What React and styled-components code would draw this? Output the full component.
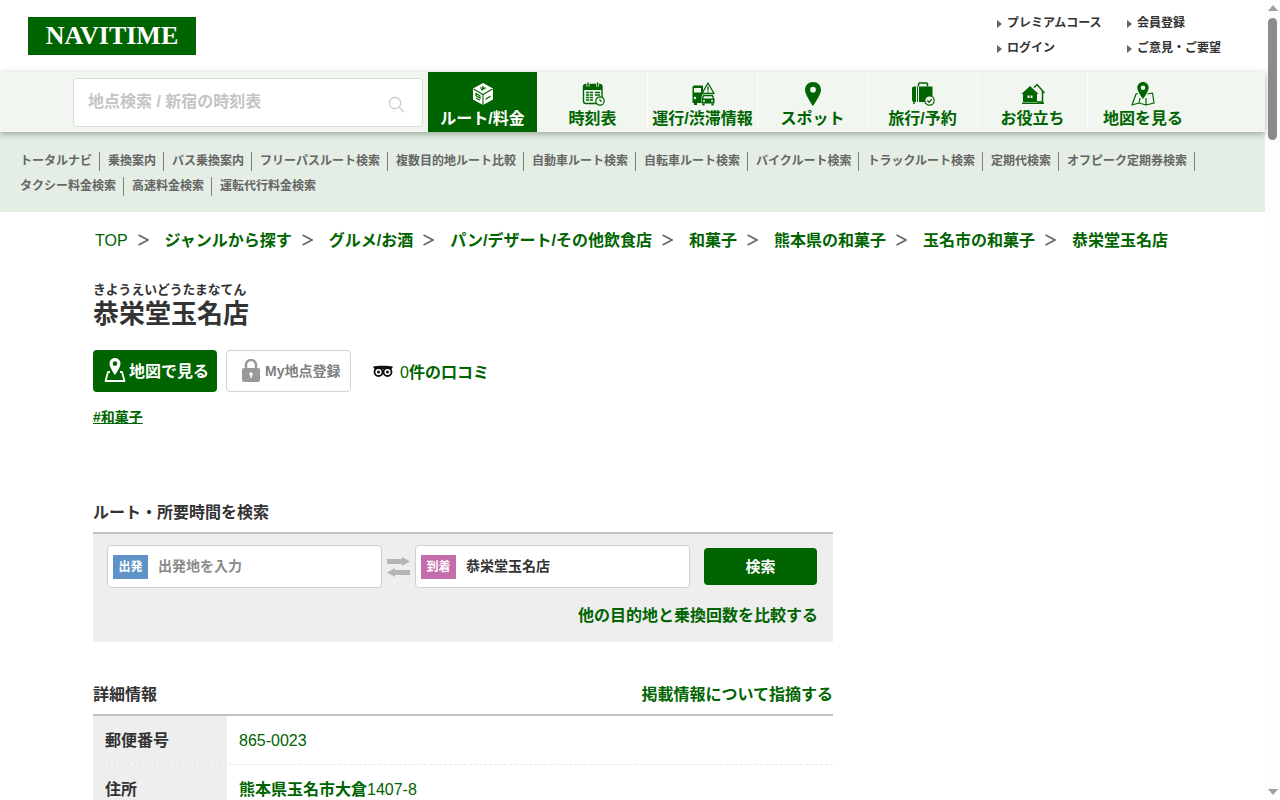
import React from "react";
import styled, { createGlobalStyle } from "styled-components";

const GREEN = "#006400";
const NAV_BG = "#f1f6f1";

const GlobalStyle = createGlobalStyle`
  html, body {
    margin: 0;
    padding: 0;
    background: #fff;
  }
  body {
    font-family: "Liberation Sans", "Noto Sans CJK JP", sans-serif;
    color: #333;
  }
  a {
    color: inherit;
    text-decoration: none;
  }
`;

const Page = styled.div`
  height: 100vh;
  overflow: hidden;
  display: flex;
`;

const Content = styled.div`
  flex: 1;
  min-width: 0;
`;

const Rail = styled.div`
  width: 15px;
  flex: none;
  background: #fdfdfd;
  display: flex;
  flex-direction: column;
  align-items: center;
`;

const RailArrow = styled.div`
  width: 0;
  height: 0;
  margin: ${(p) => (p.$down ? "auto 0 5px" : "5px 0 7px")};
  border-left: 5px solid transparent;
  border-right: 5px solid transparent;
  border-bottom: ${(p) => (p.$down ? "0" : "6px solid #a0a0a0")};
  border-top: ${(p) => (p.$down ? "6px solid #a0a0a0" : "0")};
`;

const RailThumb = styled.div`
  width: 9px;
  height: 122px;
  border-radius: 5px;
  background: #8c8c8c;
`;

const Top = styled.header`
  height: 72px;
  display: flex;
  justify-content: space-between;
  padding: 17px 43px 0 28px;
  box-sizing: border-box;
`;

const Logo = styled.a`
  width: 168px;
  height: 38px;
  background: ${GREEN};
  color: #fff;
  font-family: "Liberation Serif", serif;
  font-size: 26px;
  font-weight: 700;
  display: flex;
  align-items: center;
  justify-content: center;
`;

const TopLinks = styled.ul`
  list-style: none;
  margin: -6px 0 0;
  padding: 0;
  display: grid;
  grid-template-columns: 130px 95px;
  grid-auto-rows: 25px;
`;

const TopLink = styled.li`
  font-size: 12px;
  font-weight: 700;
  line-height: 25px;
  color: #333;
  padding-left: 10px;
  position: relative;
  &::before {
    content: "";
    position: absolute;
    left: 0;
    top: 9px;
    border-left: 5px solid #666;
    border-top: 4px solid transparent;
    border-bottom: 4px solid transparent;
  }
`;

const NavBar = styled.nav`
  height: 60px;
  background: ${NAV_BG};
  display: flex;
  padding-left: 73px;
  box-shadow: 0 2px 6px rgba(60, 80, 60, 0.45);
  position: relative;
  z-index: 1;
`;

const SearchBox = styled.div`
  width: 350px;
  height: 49px;
  box-sizing: border-box;
  margin: 6px 5px 0 0;
  background: #fff;
  border: 1px solid #d9d9d9;
  border-radius: 4px;
  display: flex;
  align-items: center;
  justify-content: space-between;
  padding: 0 17px 0 14px;
  font-size: 16px;
  font-weight: 700;
  color: #c4c4c4;
  svg {
    margin-top: 3px;
  }
`;

const SearchText = styled.span`
  margin-top: -5px;
`;

const NavItem = styled.a`
  width: 110px;
  flex: none;
  box-sizing: border-box;
  display: flex;
  flex-direction: column;
  align-items: center;
  padding-top: 10px;
  font-size: 16px;
  font-weight: 700;
  line-height: 20px;
  white-space: nowrap;
  color: ${(p) => (p.$active ? "#fff" : GREEN)};
  background: ${(p) => (p.$active ? GREEN : "transparent")};
  border-right: ${(p) => (p.$last ? "0" : "1px solid #fbfdfb")};
  svg {
    display: block;
    margin-bottom: 3px;
  }
`;

const SubNav = styled.div`
  height: 80px;
  background: #e4eee4;
  padding: 20px 20px 0;
  box-sizing: border-box;
  display: flex;
  flex-wrap: wrap;
  align-content: flex-start;
  row-gap: 6px;
`;

const SubLink = styled.a`
  font-size: 12px;
  font-weight: 700;
  line-height: 18px;
  height: 19px;
  color: #666;
  padding-right: 7px;
  margin-right: 8px;
  border-right: ${(p) => (p.$last ? "0" : "1px solid #808080")};
  white-space: nowrap;
`;

const Crumbs = styled.div`
  display: flex;
  align-items: baseline;
  height: 57px;
  box-sizing: border-box;
  padding: 17px 0 0 95px;
  font-size: 16px;
  line-height: 24px;
  font-weight: 700;
  color: ${GREEN};
  white-space: nowrap;
`;

const CrumbTop = styled.a`
  font-weight: 400;
`;

const Chevron = styled.svg`
  width: 11px;
  height: 12px;
  margin: 0 16px 0 10px;
  flex: none;
`;

const Main = styled.main`
  width: 740px;
  margin-left: 93px;
`;

const Ruby = styled.div`
  font-size: 12.8px;
  font-weight: 700;
  line-height: 14px;
  margin-top: 14px;
`;

const Title = styled.h1`
  font-size: 26px;
  font-weight: 700;
  line-height: 30px;
  margin: 2px 0 0;
  color: #333;
`;

const Actions = styled.div`
  display: flex;
  align-items: center;
  margin-top: 21px;
`;

const MapButton = styled.a`
  width: 124px;
  height: 42px;
  box-sizing: border-box;
  background: ${GREEN};
  border-radius: 4px;
  color: #fff;
  font-size: 16px;
  font-weight: 700;
  display: flex;
  align-items: center;
  padding: 0 0 2px 11px;
  gap: 3px;
  white-space: nowrap;
`;

const MyButton = styled.a`
  width: 125px;
  height: 42px;
  box-sizing: border-box;
  margin-left: 9px;
  background: #fff;
  border: 1px solid #d2d2d2;
  border-radius: 4px;
  color: #808080;
  font-size: 14px;
  font-weight: 700;
  display: flex;
  align-items: center;
  padding: 0 0 2px 15px;
  gap: 5px;
  white-space: nowrap;
`;

const Review = styled.a`
  margin-left: 22px;
  display: flex;
  align-items: center;
  gap: 7px;
  font-size: 16px;
  font-weight: 700;
  color: ${GREEN};
  span {
    font-weight: 400;
  }
`;

const Tag = styled.a`
  display: inline-block;
  margin-top: 16px;
  font-size: 14px;
  line-height: 18px;
  font-weight: 700;
  color: ${GREEN};
  text-decoration: underline;
`;

const SectionHead = styled.div`
  display: flex;
  justify-content: space-between;
  align-items: center;
  height: 43px;
  padding-bottom: 2px;
  margin-top: ${(p) => p.$top}px;
  font-size: 16px;
  font-weight: 700;
  color: #333;
  border-bottom: 2px solid #c3c3c3;
  box-sizing: border-box;
  a {
    color: ${GREEN};
  }
`;

const RoutePanel = styled.div`
  background: #eee;
  height: 108px;
  box-sizing: border-box;
  padding: 11px 15px 0 14px;
`;

const RouteRow = styled.div`
  display: flex;
  align-items: flex-start;
`;

const Field = styled.div`
  width: 275px;
  height: 43px;
  box-sizing: border-box;
  background: #fff;
  border: 1px solid #d0d0d0;
  border-radius: 4px;
  display: flex;
  align-items: center;
  padding-left: 5px;
  font-size: 14px;
  font-weight: 700;
  color: ${(p) => (p.$filled ? "#333" : "#8a8a8a")};
`;

const FieldText = styled.span`
  margin-top: -3px;
`;

const Badge = styled.span`
  width: 35px;
  height: 24px;
  padding-bottom: 2px;
  box-sizing: border-box;
  flex: none;
  margin-right: 10px;
  background: ${(p) => p.$bg};
  color: #fff;
  font-size: 12px;
  font-weight: 700;
  display: flex;
  align-items: center;
  justify-content: center;
`;

const Swap = styled.svg`
  width: 23px;
  height: 20px;
  margin: 12px 5px 0;
  flex: none;
`;

const SearchButton = styled.a`
  width: 113px;
  height: 37px;
  box-sizing: border-box;
  padding-bottom: 2px;
  margin: 3px 0 0 14px;
  background: ${GREEN};
  border-radius: 4px;
  color: #fff;
  font-size: 15px;
  font-weight: 700;
  display: flex;
  align-items: center;
  justify-content: center;
`;

const CompareLink = styled.a`
  display: block;
  text-align: right;
  margin: 16px 0 0;
  font-size: 16px;
  line-height: 24px;
  font-weight: 700;
  color: ${GREEN};
`;

const InfoRow = styled.div`
  display: flex;
  height: 49px;
  box-sizing: border-box;
  border-bottom: 1px dashed #e8e8e8;
`;

const InfoLabel = styled.div`
  width: 134px;
  flex: none;
  box-sizing: border-box;
  padding: 14px 0 0 12px;
  background: #eee;
  font-size: 16px;
  font-weight: 700;
  line-height: 22px;
  color: #333;
`;

const InfoValue = styled.div`
  padding: 14px 0 0 12px;
  font-size: 16px;
  line-height: 22px;
  color: ${GREEN};
`;

const NAV = [
  { label: "ルート/料金", active: true, icon: "route" },
  { label: "時刻表", icon: "timetable" },
  { label: "運行/渋滞情報", icon: "traffic" },
  { label: "スポット", icon: "spot" },
  { label: "旅行/予約", icon: "travel" },
  { label: "お役立ち", icon: "house" },
  { label: "地図を見る", icon: "map", last: true },
];

const SUB = [
  "トータルナビ", "乗換案内", "バス乗換案内", "フリーパスルート検索", "複数目的地ルート比較",
  "自動車ルート検索", "自転車ルート検索", "バイクルート検索", "トラックルート検索", "定期代検索",
  "オフピーク定期券検索", "タクシー料金検索", "高速料金検索", "運転代行料金検索",
];

const CRUMBS = [
  "ジャンルから探す", "グルメ/お酒", "パン/デザート/その他飲食店", "和菓子",
  "熊本県の和菓子", "玉名市の和菓子", "恭栄堂玉名店",
];

const NavIcon = ({ name }) => {
  switch (name) {
    case "route":
      return (
        <svg viewBox="0 0 24 24" width="24" height="24" fill="none">
          <path d="M12 1 22 6.500V17.500L12 23 2 17.500V6.500z" fill="#fff" />
          <path d="M2.500 7 12 12.500 21.500 7M12 12.500V23" stroke={GREEN} strokeWidth="1.100" />
          <path d="M9 6h6M12 3.800v4.400M10 8l4-2" stroke={GREEN} strokeWidth="1.200" />
          <path d="M5 11.500l4 2.300v2.200l-4-2.300zM5 16l4 2.300" stroke={GREEN} strokeWidth="1.200" />
          <path d="M14.500 18l5-3v-1.500l-5 3z" fill={GREEN} />
        </svg>
      );
    case "timetable":
      return (
        <svg viewBox="0 0 24 24" width="24" height="24" fill="none">
          <rect x="2.500" y="2.500" width="18.500" height="19" rx="2.500" fill={NAV_BG} stroke={GREEN} strokeWidth="1.400" />
          <path d="M2.500 5a2.500 2.500 0 0 1 2.500-2.500h13.500A2.500 2.500 0 0 1 21 5v3H2.500z" fill={GREEN} />
          <path d="M7 .5v4M16.500 .5v4" stroke={NAV_BG} strokeWidth="3" />
          <path d="M7 .5v4M16.500 .5v4" stroke={GREEN} strokeWidth="1.500" />
          <path d="M5 10.500h7M5 13h7M5 15.500h7M5 18h7M14 10.500h5M14 13h5" stroke={GREEN} strokeWidth="1.400" />
          <path d="M8.500 10v9" stroke={NAV_BG} strokeWidth=".7" />
          <circle cx="19" cy="19" r="4.200" fill={NAV_BG} stroke={GREEN} strokeWidth="1.200" />
          <path d="M19 16.700v2.500h2" stroke={GREEN} strokeWidth="1" />
        </svg>
      );
    case "traffic":
      return (
        <svg viewBox="0 0 24 24" width="24" height="24" fill="none">
          <path d="M1.500 5a1.500 1.500 0 0 1 1.500-1.500h9V9L10 18v3H1.500z" fill={GREEN} />
          <rect x="3" y="6" width="7" height="4.500" fill={NAV_BG} />
          <path d="M3 21h3v2H3z" fill={GREEN} />
          <circle cx="4" cy="16" r="1.200" fill={NAV_BG} />
          <path d="M17 1 23 11.500H11z" fill={NAV_BG} stroke={GREEN} strokeWidth="1.300" strokeLinejoin="round" />
          <path d="M17 4.500v4M17 9.200v1.300" stroke={GREEN} strokeWidth="1.300" />
          <path d="M10.500 17l1.500-4h10l1.500 4v4.500h-13z" fill={GREEN} />
          <path d="M13 14.200h8l.8 2.300H12.200z" fill={NAV_BG} />
          <path d="M12.500 21.500V23.500M21.500 21.500V23.500" stroke={GREEN} strokeWidth="2.200" />
          <circle cx="13" cy="19" r="1" fill={NAV_BG} />
          <circle cx="21" cy="19" r="1" fill={NAV_BG} />
        </svg>
      );
    case "spot":
      return (
        <svg viewBox="0 0 24 24" width="24" height="24">
          <path
            fill={GREEN}
            fillRule="evenodd"
            d="M12 0c-4.500 0-8 3.400-8 7.700C4 12.800 12 24 12 24s8-11.200 8-16.300C20 3.400 16.500 0 12 0zm0 4.800a2.900 2.900 0 1 1 0 5.800 2.900 2.900 0 0 1 0-5.800z"
          />
        </svg>
      );
    case "travel":
      return (
        <svg viewBox="0 0 24 24" width="24" height="24" fill="none">
          <path d="M7.500 4.500V2.200A1.200 1.200 0 0 1 8.700 1h6.600a1.200 1.200 0 0 1 1.200 1.200v2.300" stroke={GREEN} strokeWidth="1.500" />
          <path d="M3 4.500h18.500V20H3a2 2 0 0 1-2-2V6.500a2 2 0 0 1 2-2z" fill={GREEN} />
          <path d="M5.500 4.500V20M7.500 4.500V20" stroke={NAV_BG} strokeWidth="1" />
          <path d="M3 20v2" stroke={GREEN} strokeWidth="1.500" />
          <circle cx="18.500" cy="18.500" r="4.700" fill={NAV_BG} stroke={GREEN} strokeWidth="1.200" />
          <path d="M16.300 18.500l1.700 1.700 2.800-3" stroke={GREEN} strokeWidth="1.300" />
        </svg>
      );
    case "house":
      return (
        <svg viewBox="0 0 24 24" width="24" height="24" fill="none">
          <path d="M.5 12 9 4l8.500 8H16v8H2v-8z" fill={GREEN} />
          <path d="M13 5.500 16 2.500 23.500 11M21.500 9v11H16" stroke={GREEN} strokeWidth="1.500" />
          <path d="M1 20.500h22v1.500H1z" fill={GREEN} />
          <path d="M6.500 13.500h2v2.500h-2zM9.500 13.500h2v2.500h-2z" fill={NAV_BG} />
        </svg>
      );
    default:
      return (
        <svg viewBox="0 0 24 24" width="24" height="24" fill="none">
          <path d="M7 11.500 5 12 1 23l7-2 7 2 8-2-1.500-10-5 1M8 21l1-5M15 23v-7" stroke={GREEN} strokeWidth="1.200" strokeLinejoin="round" />
          <path
            fill={GREEN}
            fillRule="evenodd"
            d="M12 0C8.700 0 6.300 2.500 6.300 5.700 6.300 9.500 12 17 12 17s5.700-7.500 5.700-11.300C17.700 2.500 15.300 0 12 0zm0 3.400a2.300 2.300 0 1 1 0 4.600 2.300 2.300 0 0 1 0-4.600z"
          />
        </svg>
      );
  }
};

const App = () => (
  <Page>
    <GlobalStyle />
    <Content>
      <Top>
        <Logo href="#">NAVITIME</Logo>
        <TopLinks>
          <TopLink>プレミアムコース</TopLink>
          <TopLink>会員登録</TopLink>
          <TopLink>ログイン</TopLink>
          <TopLink>ご意見・ご要望</TopLink>
        </TopLinks>
      </Top>

      <NavBar>
        <SearchBox>
          <SearchText>地点検索 / 新宿の時刻表</SearchText>
          <svg viewBox="0 0 18 18" width="17" height="17" fill="none" stroke="#c4c4c4" strokeWidth="1.200">
            <circle cx="7.500" cy="7.500" r="6" />
            <path d="M12 12l5 5" />
          </svg>
        </SearchBox>
        {NAV.map((item) => (
          <NavItem key={item.label} href="#" $active={item.active} $last={item.last}>
            <NavIcon name={item.icon} />
            {item.label}
          </NavItem>
        ))}
      </NavBar>

      <SubNav>
        {SUB.map((s, i) => (
          <SubLink key={s} href="#" $last={i === SUB.length - 1}>
            {s}
          </SubLink>
        ))}
      </SubNav>

      <Crumbs>
        <CrumbTop href="#">TOP</CrumbTop>
        {CRUMBS.map((c) => (
          <React.Fragment key={c}>
            <Chevron viewBox="0 0 11 12" fill="none" stroke="#6b6b6b" strokeWidth="1.800">
              <path d="M.5 1l9.500 5-9.500 5" />
            </Chevron>
            <a href="#">{c}</a>
          </React.Fragment>
        ))}
      </Crumbs>

      <Main>
        <Ruby>きようえいどうたまなてん</Ruby>
        <Title>恭栄堂玉名店</Title>
        <Actions>
          <MapButton href="#">
            <svg viewBox="0 0 22 24" width="22" height="24" fill="none">
              <path d="M6 14H4L1.500 23h19L18 14h-2" stroke="#fff" strokeWidth="1.800" strokeLinejoin="round" />
              <path
                fill="#fff"
                fillRule="evenodd"
                d="M11 0C7.700 0 5.500 2.500 5.500 5.500 5.500 9.500 11 17 11 17s5.500-7.500 5.500-11.500C16.500 2.500 14.300 0 11 0zm0 3.300a2.300 2.300 0 1 1 0 4.600 2.300 2.300 0 0 1 0-4.600z"
              />
            </svg>
            地図で見る
          </MapButton>
          <MyButton href="#">
            <svg viewBox="0 0 18 23" width="18" height="23" fill="none">
              <path d="M4 10V6a5 5 0 0 1 10 0v4" stroke="#999" strokeWidth="2.400" />
              <rect y="9" width="18" height="14" rx="2" fill="#999" />
              <circle cx="9" cy="15" r="1.800" fill="#fff" />
              <path d="M9 15v4" stroke="#fff" strokeWidth="1.400" />
            </svg>
            My地点登録
          </MyButton>
          <Review href="#">
            <svg viewBox="0 0 20 12" width="20" height="12" fill="none">
              <path d="M0 1.800C4 .4 16 .4 20 1.800L18.500 4h-17z" fill="#111" />
              <circle cx="5.500" cy="7" r="4" stroke="#111" strokeWidth="1.800" />
              <circle cx="14.500" cy="7" r="4" stroke="#111" strokeWidth="1.800" />
              <circle cx="5.500" cy="7" r="1.500" fill="#111" />
              <circle cx="14.500" cy="7" r="1.500" fill="#111" />
            </svg>
            <div>
              <span>0</span>件の口コミ
            </div>
          </Review>
        </Actions>
        <Tag href="#">#和菓子</Tag>

        <SectionHead $top={65}>ルート・所要時間を検索</SectionHead>
        <RoutePanel>
          <RouteRow>
            <Field>
              <Badge $bg="#5f93c7">出発</Badge>
              <FieldText>出発地を入力</FieldText>
            </Field>
            <Swap viewBox="0 0 23 20" fill="#b5b5b5">
              <path d="M0 2h15V0l8 4.500L15 9V7H0z" />
              <path d="M23 13H8v-2L0 15.500 8 20v-2h15z" />
            </Swap>
            <Field $filled>
              <Badge $bg="#c56daa">到着</Badge>
              <FieldText>恭栄堂玉名店</FieldText>
            </Field>
            <SearchButton href="#">検索</SearchButton>
          </RouteRow>
          <CompareLink href="#">他の目的地と乗換回数を比較する</CompareLink>
        </RoutePanel>

        <SectionHead $top={31}>
          詳細情報
          <a href="#">掲載情報について指摘する</a>
        </SectionHead>
        <InfoRow>
          <InfoLabel>郵便番号</InfoLabel>
          <InfoValue>865-0023</InfoValue>
        </InfoRow>
        <InfoRow>
          <InfoLabel>住所</InfoLabel>
          <InfoValue>
            <b>熊本県玉名市大倉</b>1407-8
          </InfoValue>
        </InfoRow>
      </Main>
    </Content>
    <Rail>
      <RailArrow />
      <RailThumb />
      <RailArrow $down />
    </Rail>
  </Page>
);

export default App;
